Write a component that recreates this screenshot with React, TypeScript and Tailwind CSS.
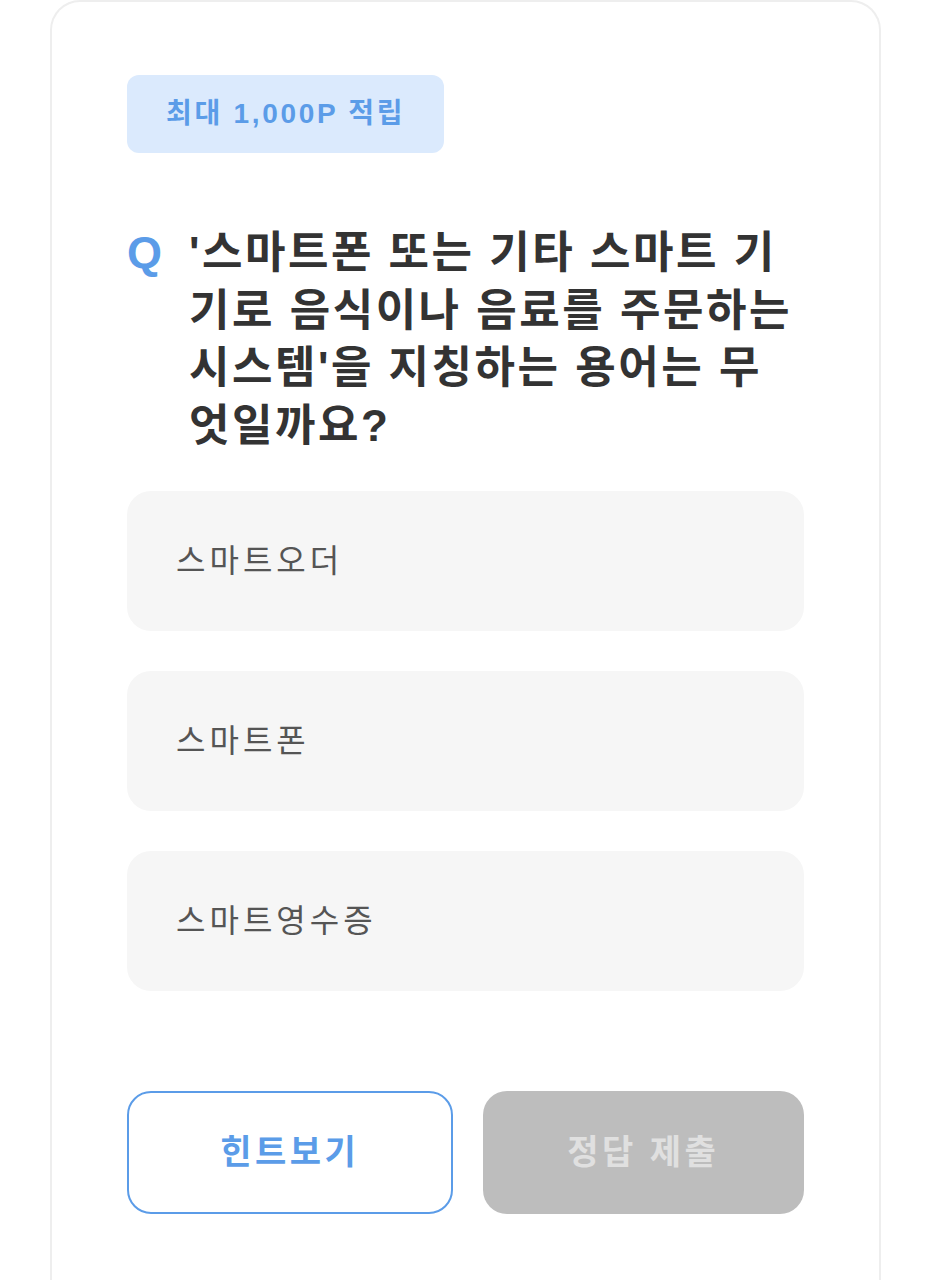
import React from "react";

const font = { fontFamily: '"Liberation Sans", "Noto Sans CJK KR", "Noto Sans", sans-serif' };

export default function App() {
  const options = ["스마트오더", "스마트폰", "스마트영수증"];
  return (
    <div className="min-h-screen bg-white" style={font}>
      <div className="mx-[50px] rounded-t-[30px] border-2 border-b-0 border-[#eeeeee] px-[75px] pt-[73px] pb-[60px] min-h-[1300px]">
        <div className="inline-flex h-[78px] items-center rounded-[12px] bg-[#dbeafd] px-[39px] text-[28px] font-bold tracking-[2.7px] text-[#5b9ce8]">
          최대 1,000P 적립
        </div>
        <div className="mt-[71px] flex">
          <span className="w-[62px] shrink-0 text-[45px] font-bold leading-[57px] text-[#5b9ce8]">Q</span>
          <p className="break-all text-[44px] font-bold leading-[57.5px] tracking-[2.5px] text-[#333333]">
            '스마트폰 또는 기타 스마트 기기로 음식이나 음료를 주문하는 시스템'을 지칭하는 용어는 무엇일까요?
          </p>
        </div>
        <div className="mt-[37px] flex flex-col gap-[40px]">
          {options.map((o) => (
            <div key={o} className="flex h-[140px] items-center rounded-[24px] bg-[#f6f6f6] px-[49px] text-[32px] tracking-[4px] text-[#555555]">
              {o}
            </div>
          ))}
        </div>
        <div className="mt-[100px] flex gap-[30px]">
          <button className="flex h-[123px] flex-1 items-center justify-center rounded-[24px] border-2 border-[#5b9ce8] bg-white text-[34px] font-bold tracking-[3.5px] text-[#5b9ce8]">
            힌트보기
          </button>
          <button className="flex h-[123px] flex-1 items-center justify-center rounded-[24px] bg-[#bdbdbd] text-[34px] font-bold tracking-[3.5px] text-[#e0e0e0]">
            정답 제출
          </button>
        </div>
      </div>
    </div>
  );
}
